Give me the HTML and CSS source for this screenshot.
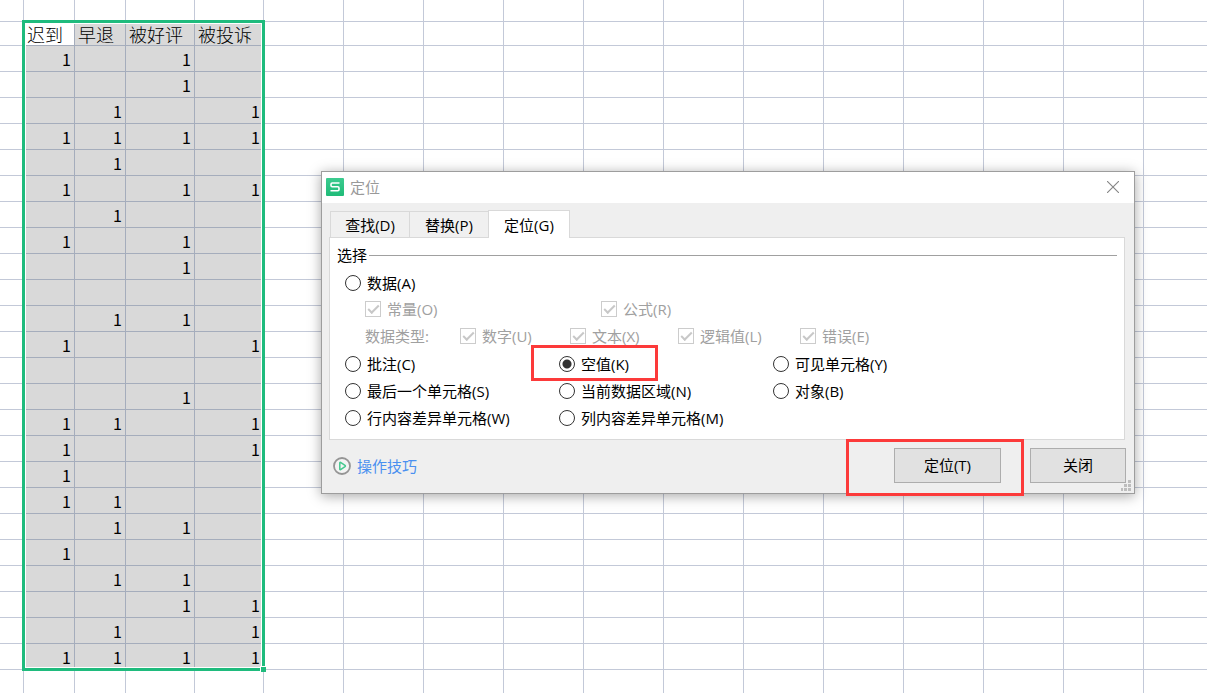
FILE: index.html
```
<!DOCTYPE html>
<html lang="zh-CN">
<head>
<meta charset="utf-8">
<title>定位</title>
<link rel="stylesheet" href="styles.css">
</head>
<body>
<main class="sheet">
  <table class="grid">
    <colgroup id="cols"></colgroup>
    <tbody id="rows"></tbody>
  </table>
  <div class="selection"><span class="handle"></span></div>
</main>

<section class="dialog" role="dialog" aria-labelledby="dialog-title">
  <header class="titlebar">
    <svg class="logo" viewBox="0 0 18 18" aria-hidden="true">
      <defs><linearGradient id="g" x1="0" y1="0" x2="0" y2="1"><stop offset="0" stop-color="#3ccb8f"/><stop offset="1" stop-color="#1fbb78"/></linearGradient></defs>
      <rect width="18" height="18" rx="1" fill="url(#g)"/>
      <path d="M13.5 5H6.2Q5 5 5 6.2V7.6Q5 8.8 6.2 8.8H11.8Q13 8.8 13 10V11.6Q13 12.8 11.8 12.8H4.5" fill="none" stroke="#fff" stroke-width="1.6"/>
    </svg>
    <h1 class="title" id="dialog-title">定位</h1>
    <button class="close" type="button" aria-label="关闭窗口">
      <svg viewBox="0 0 12 12" aria-hidden="true"><path d="M0 0L12 12M12 0L0 12" stroke="#858585" stroke-width="1.1"/></svg>
    </button>
  </header>

  <nav class="tabs" role="tablist">
    <button class="tab" type="button" role="tab">查找(D)</button>
    <button class="tab" type="button" role="tab">替换(P)</button>
    <button class="tab tab-active" type="button" role="tab" aria-selected="true">定位(G)</button>
  </nav>

  <form class="pane">
    <div class="legend">选择</div>
    <div class="row"><label class="option"><input type="radio" name="target">数据(A)</label></div>
    <div class="row row-checks">
      <label class="option"><input type="checkbox" checked disabled>常量(O)</label>
      <label class="option"><input type="checkbox" checked disabled>公式(R)</label>
    </div>
    <div class="row row-types">
      <span>数据类型:</span>
      <label class="option"><input type="checkbox" checked disabled>数字(U)</label>
      <label class="option"><input type="checkbox" checked disabled>文本(X)</label>
      <label class="option"><input type="checkbox" checked disabled>逻辑值(L)</label>
      <label class="option"><input type="checkbox" checked disabled>错误(E)</label>
    </div>
    <div class="row">
      <label class="option"><input type="radio" name="target">批注(C)</label>
      <label class="option marked-option"><input type="radio" name="target" checked>空值(K)</label>
      <label class="option"><input type="radio" name="target">可见单元格(Y)</label>
    </div>
    <div class="row">
      <label class="option"><input type="radio" name="target">最后一个单元格(S)</label>
      <label class="option"><input type="radio" name="target">当前数据区域(N)</label>
      <label class="option"><input type="radio" name="target">对象(B)</label>
    </div>
    <div class="row">
      <label class="option"><input type="radio" name="target">行内容差异单元格(W)</label>
      <label class="option"><input type="radio" name="target">列内容差异单元格(M)</label>
    </div>
  </form>

  <footer class="footer">
    <a class="tips" href="#">
      <svg viewBox="0 0 18 18" aria-hidden="true"><circle cx="9" cy="9" r="8" fill="#f4f4f4" stroke="#959595" stroke-width="1.8"/><path d="M6.8 5.8Q6.8 5 7.6 5.4L12 8.4Q12.8 9 12 9.6L7.6 12.6Q6.8 13 6.8 12.2Z" fill="none" stroke="#45c98f" stroke-width="1.5"/></svg>
      操作技巧
    </a>
    <span class="marked-action"><button class="button button-locate" type="button">定位(T)</button></span>
    <button class="button" type="button">关闭</button>
  </footer>
  <svg class="grip" viewBox="0 0 10 11" aria-hidden="true"><path d="M7 0h3v3h-3zM3 4h3v3h-3zM7 4h3v3h-3zM0 8h2v3h-2zM3 8h3v3h-3zM7 8h3v3h-3z" fill="#bdbdbd"/></svg>
</section>
<script src="sheet.js"></script>
</body>
</html>
```

FILE: styles.css
```
*, *::before, *::after { box-sizing: border-box; }

body {
  margin: 0;
  height: 100vh;
  overflow: hidden;
  position: relative;
  background: #fff;
  color: #000;
  font: 15px/20px "Open Sans", "Noto Sans CJK SC", sans-serif;
}

button, input { font: inherit; color: inherit; margin: 0; }

/* Spreadsheet */
.sheet { position: relative; }
.grid {
  width: 100%;
  table-layout: fixed;
  border-collapse: separate;
  border-spacing: 0;
}
.col-edge { width: 24px; }
.col-short { width: 51px; }
.col-long { width: 69px; }
.col-plain { width: 80px; }
.grid td, .grid th {
  height: 26px;
  padding: 0 3px 0 0;
  border: solid #c3c9d8;
  border-width: 0 1px 1px 0;
  font: 16px/20px "Noto Sans CJK SC", sans-serif;
  text-align: right;
  white-space: nowrap;
}
.grid td:last-child { border-right: 0; }
.grid .row-top td { height: 22px; }
.grid .row-head td, .grid .row-head th { height: 24px; }
.grid th {
  padding: 0 0 0 3px;
  font-size: 18px;
  font-weight: 300;
  text-align: left;
}
.grid .picked { background: #d9d9d9; border-color: #a5adbc; }
.grid .current { background: #fff; }

.selection {
  position: absolute;
  left: 22px;
  top: 20px;
  width: 243px;
  height: 651px;
  border: 3px solid #1fbb7d;
  box-shadow: inset 0 0 0 1px #fff;
}
.handle {
  position: absolute;
  right: -4px;
  bottom: -4px;
  width: 6px;
  height: 6px;
  background: #1fbb7d;
  border: solid #fff;
  border-width: 1px 0 0 1px;
}

/* Dialog */
.dialog {
  position: absolute;
  left: 321px;
  right: 72px;
  top: 171px;
  border: 1px solid #9d9d9d;
  background: #efefef;
  box-shadow: 0 2px 12px rgba(0, 0, 0, .35);
}
.titlebar {
  display: flex;
  align-items: center;
  gap: 6px;
  height: 31px;
  padding: 0 15px 1px 4px;
  background: #fff;
}
.logo { width: 18px; height: 18px; }
.title { flex: 1; margin: 0; color: #999; font-size: 15px; font-weight: 400; }
.close { display: flex; padding: 0; border: 0; background: none; }
.close svg { width: 12px; height: 12px; }

.tabs {
  display: flex;
  align-items: flex-end;
  height: 34px;
  padding: 0 8px;
}
.tab {
  width: 79px;
  height: 26px;
  padding: 0;
  border: 1px solid #d9d9d9;
  border-width: 1px 0 0 1px;
  background: #f0f0f0;
}
.tab-active {
  position: relative;
  z-index: 1;
  width: 82px;
  height: 28px;
  margin-bottom: -1px;
  border-right-width: 1px;
  background: #fff;
}

.pane {
  margin: 0 9px 0 7px;
  padding: 4px 7px 8px;
  border: 1px solid #d9d9d9;
  background: #fff;
}
.legend {
  display: flex;
  align-items: center;
  gap: 2px;
  height: 26px;
  margin-bottom: 1px;
}
.legend::after { content: ""; flex: 1; height: 1px; background: #a0a0a0; }

.row {
  display: grid;
  grid-template-columns: 214px 214px 1fr;
  align-items: center;
  height: 27px;
  padding-left: 8px;
}
.row-checks, .row-types { padding-left: 28px; color: #a0a0a0; }
.row-checks { grid-template-columns: 236px 1fr; height: 26px; }
.row-types { grid-template-columns: 95px 110px 108px 122px 1fr; height: 28px; }

.option {
  display: flex;
  align-items: center;
  gap: 6px;
  position: relative;
  white-space: nowrap;
}
.option input {
  appearance: none;
  flex: none;
  width: 16px;
  height: 16px;
  border: 1px solid #333;
  background: #fff;
}
.option input[type="radio"] { border-radius: 50%; }
.option input[type="radio"]:checked {
  background: radial-gradient(circle, #333 0 4px, #fff 5px);
}
.option input[type="checkbox"] {
  display: grid;
  place-items: center;
  border-color: #ccc;
}
.option input[type="checkbox"]::before {
  content: "";
  width: 11px;
  height: 6px;
  border: solid #c8c8c8;
  border-width: 0 0 2px 2px;
  transform: translateY(-1px) rotate(-45deg);
}

.marked-option::after, .marked-action::after {
  content: "";
  position: absolute;
  z-index: 1;
  border: 3px solid #fc3a3a;
  pointer-events: none;
}
.marked-option::after { left: -28px; top: -9px; width: 127px; height: 36px; }
.marked-action { position: relative; display: flex; margin-right: 29px; }
.marked-action::after { left: -48px; right: -23px; top: -9px; bottom: -13px; }

.footer {
  display: flex;
  align-items: center;
  padding: 8px 8px 10px 11px;
}
.tips {
  display: flex;
  align-items: center;
  gap: 6px;
  margin-right: auto;
  color: #4a90f0;
  text-decoration: none;
}
.tips svg { width: 18px; height: 18px; }
.button {
  width: 96px;
  height: 35px;
  padding: 0 0 1px;
  border: 1px solid #adadad;
  background: #e1e1e1;
}
.button-locate { width: 107px; }
.grip { position: absolute; right: 3px; bottom: 2px; width: 10px; height: 11px; }
```

FILE: sheet.js
```
const heads = ["迟到", "早退", "被好评", "被投诉"];
const marks = [
  "1010", "0010", "0101", "1111", "0100", "1011", "0100", "1010",
  "0010", "0000", "0110", "1001", "0000", "0010", "1101", "1001",
  "1000", "1100", "0110", "1000", "0110", "0011", "0101", "1111"
];
const plainCount = 11;

const classes = ["col-edge", "col-short", "col-short", "col-long", "col-long",
  ...Array(plainCount).fill("col-plain"), ""];
document.getElementById("cols").innerHTML =
  classes.map(name => `<col class="${name}">`).join("");

const tail = "<td></td>".repeat(plainCount + 1);
const line = (name, cells) => `<tr class="${name}"><td></td>${cells}${tail}</tr>`;
const blank = "<td></td>".repeat(4);

const headCells = heads
  .map((text, i) => `<th scope="col" class="picked${i ? "" : " current"}">${text}</th>`)
  .join("");
const body = marks.map(row => line("", [...row]
  .map(v => `<td class="picked">${v === "1" ? "1" : ""}</td>`)
  .join("")));

document.getElementById("rows").innerHTML =
  [line("row-top", blank), line("row-head", headCells), ...body, line("", blank)].join("");
```
